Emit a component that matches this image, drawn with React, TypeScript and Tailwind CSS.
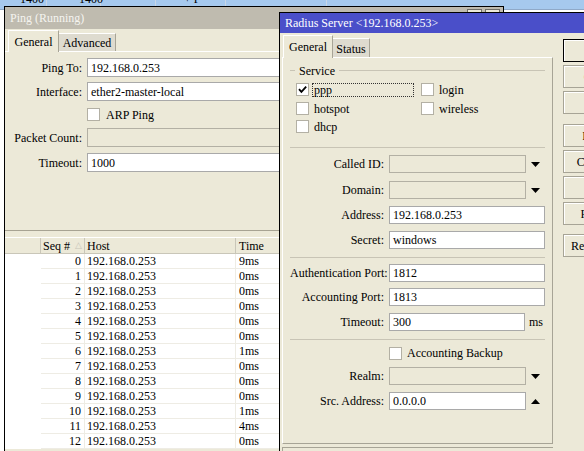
import React from "react";

const pingRows: [string, string][] = [
  ["0", "9ms"], ["1", "0ms"], ["2", "0ms"], ["3", "0ms"], ["4", "0ms"], ["5", "0ms"], ["6", "1ms"],
  ["7", "0ms"], ["8", "0ms"], ["9", "0ms"], ["10", "1ms"], ["11", "4ms"], ["12", "0ms"],
];

function Check({ checked }: { checked?: boolean }) {
  return (
    <div className="w-[13px] h-[13px] bg-white border border-[#b3b0a4] flex items-center justify-center shrink-0">
      {checked && (
        <svg width="9" height="9" viewBox="0 0 9 9">
          <path d="M1 4.2 L3.4 6.8 L8.2 1.6" stroke="#000" strokeWidth="1.8" fill="none" />
        </svg>
      )}
    </div>
  );
}

function Input({ value, disabled, className }: { value?: string; disabled?: boolean; className: string }) {
  return (
    <div
      className={`border flex items-center pl-[3px] shrink-0 whitespace-nowrap overflow-hidden ${
        disabled ? "bg-[#ece9d8] border-[#b3b0a4]" : "bg-white border-[#a9a9a9]"
      } ${className}`}
    >
      {value}
    </div>
  );
}

function Tri({ up }: { up?: boolean }) {
  return (
    <svg width="9" height="5" viewBox="0 0 9 5" className="shrink-0">
      <path d={up ? "M0 5 L4.5 0 L9 5Z" : "M0 0 L9 0 L4.5 5Z"} fill="#000" />
    </svg>
  );
}

function Btn({ label, def, className }: { label: string; def?: boolean; className: string }) {
  return (
    <div
      className={`w-[75px] h-[23px] flex items-center justify-center bg-[#ece9d8] border shadow-[inset_1px_1px_0_#ffffff] whitespace-nowrap ${
        def ? "border-black" : "border-[#a7a496]"
      } ${className}`}
    >
      {label}
    </div>
  );
}

function RField({ label, children, className }: { label: string; children: React.ReactNode; className: string }) {
  return (
    <div className={`flex items-center h-[18px] ${className}`}>
      <div className="w-[94px] text-right whitespace-nowrap">{label}</div>
      <div className="ml-[5px] flex items-center">{children}</div>
    </div>
  );
}

function Sep({ className }: { className: string }) {
  return <div className={`h-[1px] bg-[#c8c4b5] ${className}`} />;
}

export default function App() {
  return (
    <div className="relative w-[584px] h-[451px] overflow-hidden bg-white font-['Liberation_Serif',serif] text-[12px] leading-none text-black">
      {/* background list strip */}
      <div className="absolute left-0 top-0 w-[584px] h-[10px] bg-[#a6c9ee] border-b border-[#8fa9c8] flex overflow-hidden">
        <div className="w-[47px] h-full border-r border-[#c8d6e6] relative">
          <span className="absolute left-[20px] top-[-7px]">1400</span>
        </div>
        <div className="w-[54px] h-full border-r border-[#c8d6e6] relative">
          <span className="absolute left-[32px] top-[-7px]">1400</span>
        </div>
        <div className="w-[55px] h-full border-r border-[#c8d6e6]" />
        <div className="w-[70px] h-full border-r border-[#c8d6e6] relative">
          <span className="absolute left-[28px] top-[-7px]">+ P</span>
        </div>
        <div className="w-[101px] h-full border-r border-[#c8d6e6]" />
      </div>

      {/* Ping window */}
      <div className="absolute left-[4px] top-[6px] w-[500px] h-[470px] border border-black bg-[#ece9d8] flex flex-col">
        <div className="h-[22px] bg-[#bfbbaf] flex items-center pl-[5px] text-[#f5f4ef] text-[12px] relative shrink-0">
          Ping (Running)
          <div className="absolute right-[3px] top-[2px] flex gap-[3px]">
            <div className="w-[15px] h-[14px] bg-[#ece9d8] border border-[#6f6d66]" />
            <div className="w-[15px] h-[14px] bg-[#ece9d8] border border-[#6f6d66]" />
          </div>
        </div>
        <div className="h-[22px] flex items-end pl-[3px] shrink-0">
          <div className="relative z-10 -mb-[1px] h-[22px] w-[51px] bg-[#ece9d8] border-l border-t border-white border-r border-r-[#a7a496] flex items-center justify-center">
            General
          </div>
          <div className="h-[18px] w-[57px] bg-[#dedbcf] border-t border-white border-r border-r-[#a7a496] flex items-center justify-center pt-[1px]">
            Advanced
          </div>
        </div>
        <div className="h-[180px] border-t border-white border-b border-b-[#a7a393] flex flex-col shrink-0">
          <div className="flex items-center h-[19px] mt-[6px]">
            <div className="w-[77px] text-right">Ping To:</div>
            <Input className="ml-[5px] w-[300px] h-[19px]" value="192.168.0.253" />
          </div>
          <div className="flex items-center h-[19px] mt-[5px]">
            <div className="w-[77px] text-right">Interface:</div>
            <Input className="ml-[5px] w-[300px] h-[19px]" value="ether2-master-local" />
          </div>
          <div className="flex items-center h-[19px] mt-[4px] pl-[82px]">
            <Check />
            <span className="ml-[6px]">ARP Ping</span>
          </div>
          <div className="flex items-center h-[19px] mt-[4px]">
            <div className="w-[77px] text-right whitespace-nowrap">Packet Count:</div>
            <Input className="ml-[5px] w-[300px] h-[19px]" disabled />
          </div>
          <div className="flex items-center h-[19px] mt-[6px]">
            <div className="w-[77px] text-right">Timeout:</div>
            <Input className="ml-[5px] w-[300px] h-[19px]" value="1000" />
          </div>
        </div>
        {/* table */}
        <div className="mt-[6px] flex flex-col">
          <div className="h-[17px] flex border-t border-[#ffffff] border-b border-b-[#c9c6b8] bg-[#ece9d8]">
            <div className="w-[36px] border-r border-[#c9c6b8]" />
            <div className="w-[44px] border-r border-[#c9c6b8] flex items-center pl-[2px]">
              Seq #
              <span className="ml-[5px] text-[#c8c5b8] text-[9px]">△</span>
            </div>
            <div className="w-[151px] border-r border-[#c9c6b8] flex items-center pl-[2px]">Host</div>
            <div className="w-[100px] flex items-center pl-[3px]">Time</div>
          </div>
          {pingRows.map(([seq, t]) => (
            <div key={seq} className="h-[15px] flex bg-white">
              <div className="w-[36px]" />
              <div className="w-[44px] border-r border-b border-[#eeece4] flex items-center justify-end pr-[3px]">{seq}</div>
              <div className="w-[151px] border-r border-b border-[#eeece4] flex items-center pl-[2px]">192.168.0.253</div>
              <div className="w-[100px] border-b border-[#eeece4] flex items-center pl-[3px]">{t}</div>
            </div>
          ))}
        </div>
      </div>

      {/* Radius window */}
      <div className="absolute left-[279px] top-[12px] w-[370px] h-[470px] border border-black bg-[#ece9d8] flex flex-col">
        <div className="h-[20px] bg-[#4a4fc9] text-white flex items-center pl-[5px] text-[12px] shrink-0">
          Radius Server &lt;192.168.0.253&gt;
        </div>
        <div className="flex">
          <div className="ml-[2px] w-[271px] flex flex-col shrink-0">
            <div className="h-[24px] flex items-end pl-[1px]">
              <div className="relative z-10 -mb-[1px] h-[23px] w-[50px] bg-[#ece9d8] border-l border-t border-white border-r border-r-[#a7a496] flex items-center justify-center">
                General
              </div>
              <div className="h-[19px] w-[37px] bg-[#dedbcf] border-t border-white border-r border-r-[#a7a496] flex items-center justify-center pt-[1px]">
                Status
              </div>
            </div>
            <div className="h-[387px] border-l border-t border-white border-r border-r-[#a7a496] border-b border-b-[#a7a496] flex flex-col px-[7px]">
              {/* Service header */}
              <div className="h-[13px] mt-[6px] flex items-center">
                <div className="w-[5px] h-[1px] bg-[#c8c4b5]" />
                <span className="ml-[4px] mr-[4px]">Service</span>
                <div className="flex-1 h-[1px] bg-[#c8c4b5]" />
              </div>
              <div className="h-[13px] mt-[6px] flex items-center pl-[6px]">
                <div className="w-[125px] flex items-center">
                  <Check checked />
                  <span className="ml-[3px] h-[14px] w-[102px] border border-dotted border-[#333] flex items-center pl-[1px]">ppp</span>
                </div>
                <Check />
                <span className="ml-[5px]">login</span>
              </div>
              <div className="h-[13px] mt-[6px] flex items-center pl-[6px]">
                <div className="w-[125px] flex items-center">
                  <Check />
                  <span className="ml-[5px]">hotspot</span>
                </div>
                <Check />
                <span className="ml-[5px]">wireless</span>
              </div>
              <div className="h-[13px] mt-[5px] flex items-center pl-[6px]">
                <Check />
                <span className="ml-[5px]">dhcp</span>
              </div>
              <Sep className="mt-[14px]" />
              <RField label="Called ID:" className="mt-[7px]">
                <Input className="w-[137px] h-[18px]" disabled />
                <div className="ml-[5px]"><Tri /></div>
              </RField>
              <RField label="Domain:" className="mt-[8px]">
                <Input className="w-[137px] h-[18px]" disabled />
                <div className="ml-[5px]"><Tri /></div>
              </RField>
              <RField label="Address:" className="mt-[7px]">
                <Input className="w-[156px] h-[18px]" value="192.168.0.253" />
              </RField>
              <RField label="Secret:" className="mt-[7px]">
                <Input className="w-[156px] h-[18px]" value="windows" />
              </RField>
              <Sep className="mt-[8px]" />
              <RField label="Authentication Port:" className="mt-[6px]">
                <Input className="w-[156px] h-[18px]" value="1812" />
              </RField>
              <RField label="Accounting Port:" className="mt-[6px]">
                <Input className="w-[156px] h-[18px]" value="1813" />
              </RField>
              <RField label="Timeout:" className="mt-[7px]">
                <Input className="w-[136px] h-[18px]" value="300" />
                <span className="ml-[4px]">ms</span>
              </RField>
              <Sep className="mt-[8px]" />
              <div className="h-[18px] mt-[4px] flex items-center pl-[99px]">
                <Check />
                <span className="ml-[5px]">Accounting Backup</span>
              </div>
              <RField label="Realm:" className="mt-[5px]">
                <Input className="w-[137px] h-[18px]" disabled />
                <div className="ml-[5px]"><Tri /></div>
              </RField>
              <RField label="Src. Address:" className="mt-[7px]">
                <Input className="w-[137px] h-[18px]" value="0.0.0.0" />
                <div className="ml-[5px]"><Tri up /></div>
              </RField>
            </div>
            <div className="mt-[3px] h-[20px] border-l border-t border-[#a7a496] pl-[8px] pt-[3px]">enabled</div>
          </div>
          <div className="ml-[10px] mt-[6px] flex flex-col">
            <Btn label="OK" def className="" />
            <Btn label="Cancel" className="mt-[3px]" />
            <Btn label="Apply" className="mt-[3px]" />
            <Btn label="Disable" className="mt-[10px]" />
            <Btn label="Comment" className="mt-[3px]" />
            <Btn label="Copy" className="mt-[3px]" />
            <Btn label="Remove" className="mt-[3px]" />
            <Btn label="Reset Status" className="mt-[9px]" />
          </div>
        </div>
      </div>
    </div>
  );
}
